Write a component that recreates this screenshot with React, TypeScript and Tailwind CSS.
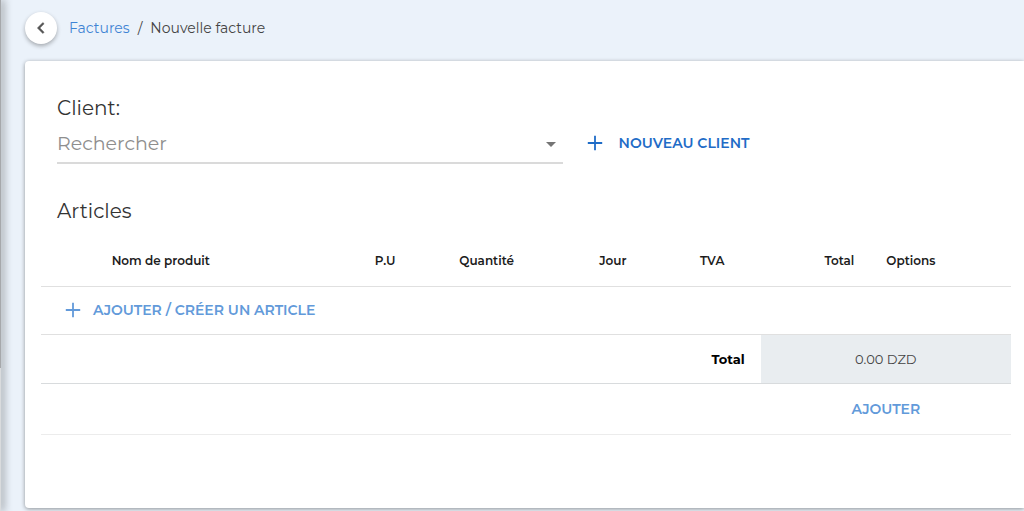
import React from "react";

function PlusIcon() {
  return (
    <svg width="24" height="24" viewBox="0 0 24 24" fill="currentColor" aria-hidden="true" className="shrink-0">
      <path d="M19.2 12.9h-6.3v6.3h-1.8v-6.3H4.8v-1.8h6.3V4.8h1.8v6.3h6.3v1.8z" />
    </svg>
  );
}

function Breadcrumb() {
  return (
    <header className="flex items-center gap-3 pt-3">
      <button
        type="button"
        aria-label="Retour"
        className="flex size-8 items-center justify-center rounded-full bg-white text-[#555] shadow-[0_2px_4px_rgba(0,0,0,0.3)]"
      >
        <svg width="22" height="22" viewBox="0 0 24 24" fill="currentColor" aria-hidden="true">
          <path d="M15.41 7.41 14 6l-6 6 6 6 1.41-1.41L10.83 12z" stroke="currentColor" strokeWidth="0.5" />
        </svg>
      </button>
      <nav aria-label="Fil d'Ariane" className="flex items-center gap-2 text-sm leading-6 text-[#444]">
        <a href="#factures" className="text-[#3f84d4]">Factures</a>
        <span>/</span>
        <span>Nouvelle facture</span>
      </nav>
    </header>
  );
}

function ClientPicker() {
  return (
    <div className="pl-4">
      <label htmlFor="client" className="block text-xl leading-7 text-[#333]">
        Client:
      </label>
      <div className="flex items-center gap-5">
        <div className="flex h-[42px] w-[53%] items-center border-b-2 border-[#dadada] pt-1">
          <input
            id="client"
            type="text"
            placeholder="Rechercher"
            className="min-w-0 flex-1 bg-transparent text-[19px] leading-7 text-[#333] outline-none placeholder:text-[#8e8e8e]"
          />
          <button type="button" aria-label="Ouvrir la liste" className="text-[#757575]">
            <svg width="24" height="24" viewBox="0 0 24 24" fill="currentColor" aria-hidden="true">
              <path d="m7 10 5 5 5-5z" />
            </svg>
          </button>
        </div>
        <button type="button" className="flex items-center gap-3 text-sm leading-6 font-semibold text-[#1f6cc7]">
          <PlusIcon />
          NOUVEAU CLIENT
        </button>
      </div>
    </div>
  );
}

function ArticleTable() {
  return (
    <table className="w-full table-fixed border-collapse text-xs leading-5 text-[#1c1c1c]">
      <colgroup>
        <col className="w-[24.7%]" />
        <col className="w-[13.5%]" />
        <col className="w-[15.5%]" />
        <col className="w-[10.5%]" />
        <col className="w-[10%]" />
        <col className="w-[11.3%]" />
        <col className="w-[14.5%]" />
      </colgroup>
      <thead>
        <tr className="h-[50px] border-b border-[#e0e0e0]">
          <th scope="col" className="px-4 text-center font-semibold">Nom de produit</th>
          <th scope="col" className="px-4 text-right font-semibold">P.U</th>
          <th scope="col" className="px-4 text-center font-semibold">Quantité</th>
          <th scope="col" className="px-4 text-center font-semibold">Jour</th>
          <th scope="col" className="px-4 text-center font-semibold">TVA</th>
          <th scope="col" className="px-4 text-right font-semibold">Total</th>
          <th scope="col" className="px-4 text-left font-semibold">Options</th>
        </tr>
      </thead>
      <tbody>
        <tr className="h-12 border-b border-[#e0e0e0]">
          <td colSpan={7} className="px-5">
            <button type="button" className="flex items-center gap-2 text-sm leading-6 font-semibold text-[#629ada]">
              <PlusIcon />
              AJOUTER / CRÉER UN ARTICLE
            </button>
          </td>
        </tr>
        <tr className="h-[49px] border-b border-[#d8dbdd]">
          <th scope="row" colSpan={5} className="px-4 text-right text-[13px] font-bold text-black">Total</th>
          <td colSpan={2} className="bg-[#e9edf0] px-4 text-center text-[13px] text-[#444]">0.00 DZD</td>
        </tr>
        <tr className="h-[51px] border-b border-[#ececec]">
          <td colSpan={5} />
          <td colSpan={2} className="px-4 text-center">
            <button type="button" className="text-sm leading-6 font-semibold text-[#629ada]">AJOUTER</button>
          </td>
        </tr>
      </tbody>
    </table>
  );
}

export default function App() {
  return (
    <div className="flex min-h-screen bg-[#ebf2fa] font-['Montserrat','Inter',sans-serif]">
      <aside className="flex w-px flex-col shadow-[1px_0_8px_1px_rgba(0,0,0,0.6)]">
        <div className="h-[72%] bg-[#a6a8ab]" />
        <div className="flex-1 bg-[#d9dbdd]" />
      </aside>
      <div className="flex min-w-0 flex-1 flex-col pb-[3px] pl-6">
        <Breadcrumb />
        <main className="mt-[17px] flex-1 rounded-l bg-white pt-[33px] pr-[13px] pb-4 pl-4 shadow-[0_1px_4px_rgba(0,0,0,0.4)]">
          <ClientPicker />
          <h2 className="mt-[33px] mb-[11px] pl-4 text-xl leading-7 text-[#333]">Articles</h2>
          <ArticleTable />
        </main>
      </div>
    </div>
  );
}
